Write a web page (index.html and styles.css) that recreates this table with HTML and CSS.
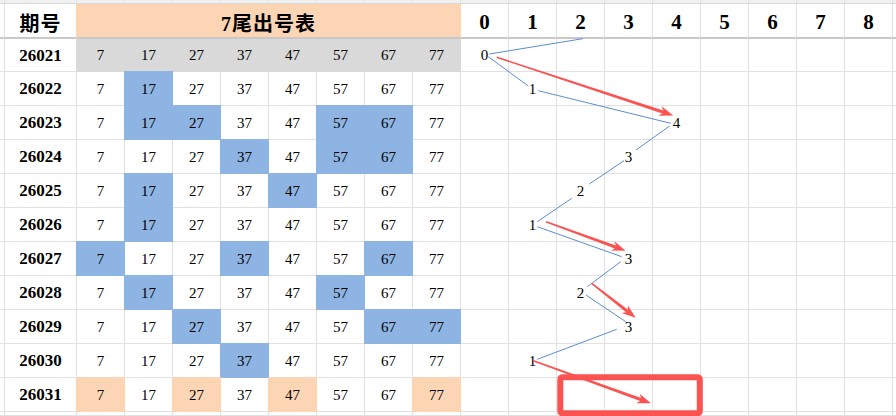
FILE: index.html
```html
<!DOCTYPE html>
<html lang="zh">
<head>
<meta charset="utf-8">
<title>7尾出号表</title>
<link rel="stylesheet" href="styles.css">
</head>
<body>
<div class="sheet">
  <div class="row top">
    <div></div><div></div><div></div><div></div><div></div><div></div><div></div><div></div><div></div><div></div><div></div><div></div><div></div><div></div><div></div><div></div><div></div><div></div><div></div><div class="last"></div>
  </div>
  <div class="row hdr">
    <div></div><div class="qh">期号</div><div class="tt">7尾出号表</div>
    <div class="hn">0</div><div class="hn">1</div><div class="hn">2</div><div class="hn">3</div><div class="hn">4</div><div class="hn">5</div><div class="hn">6</div><div class="hn">7</div><div class="hn">8</div><div class="last"></div>
  </div>
  <div class="row r1">
    <div></div><div class="id">26021</div>
    <div class="g">7</div><div class="g">17</div><div class="g">27</div><div class="g">37</div><div class="g">47</div><div class="g">57</div><div class="g">67</div><div class="g">77</div>
    <div>0</div><div></div><div></div><div></div><div></div><div></div><div></div><div></div><div></div><div class="last"></div>
  </div>
  <div class="row">
    <div></div><div class="id">26022</div>
    <div>7</div><div class="b">17</div><div>27</div><div>37</div><div>47</div><div>57</div><div>67</div><div>77</div>
    <div></div><div>1</div><div></div><div></div><div></div><div></div><div></div><div></div><div></div><div class="last"></div>
  </div>
  <div class="row">
    <div></div><div class="id">26023</div>
    <div>7</div><div class="b">17</div><div class="b">27</div><div>37</div><div>47</div><div class="b">57</div><div class="b">67</div><div>77</div>
    <div></div><div></div><div></div><div></div><div>4</div><div></div><div></div><div></div><div></div><div class="last"></div>
  </div>
  <div class="row">
    <div></div><div class="id">26024</div>
    <div>7</div><div>17</div><div>27</div><div class="b">37</div><div>47</div><div class="b">57</div><div class="b">67</div><div>77</div>
    <div></div><div></div><div></div><div>3</div><div></div><div></div><div></div><div></div><div></div><div class="last"></div>
  </div>
  <div class="row">
    <div></div><div class="id">26025</div>
    <div>7</div><div class="b">17</div><div>27</div><div>37</div><div class="b">47</div><div>57</div><div>67</div><div>77</div>
    <div></div><div></div><div>2</div><div></div><div></div><div></div><div></div><div></div><div></div><div class="last"></div>
  </div>
  <div class="row">
    <div></div><div class="id">26026</div>
    <div>7</div><div class="b">17</div><div>27</div><div>37</div><div>47</div><div>57</div><div>67</div><div>77</div>
    <div></div><div>1</div><div></div><div></div><div></div><div></div><div></div><div></div><div></div><div class="last"></div>
  </div>
  <div class="row">
    <div></div><div class="id">26027</div>
    <div class="b">7</div><div>17</div><div>27</div><div class="b">37</div><div>47</div><div>57</div><div class="b">67</div><div>77</div>
    <div></div><div></div><div></div><div>3</div><div></div><div></div><div></div><div></div><div></div><div class="last"></div>
  </div>
  <div class="row">
    <div></div><div class="id">26028</div>
    <div>7</div><div class="b">17</div><div>27</div><div>37</div><div>47</div><div class="b">57</div><div>67</div><div>77</div>
    <div></div><div></div><div>2</div><div></div><div></div><div></div><div></div><div></div><div></div><div class="last"></div>
  </div>
  <div class="row">
    <div></div><div class="id">26029</div>
    <div>7</div><div>17</div><div class="b">27</div><div>37</div><div>47</div><div>57</div><div class="b">67</div><div class="b">77</div>
    <div></div><div></div><div></div><div>3</div><div></div><div></div><div></div><div></div><div></div><div class="last"></div>
  </div>
  <div class="row">
    <div></div><div class="id">26030</div>
    <div>7</div><div>17</div><div>27</div><div class="b">37</div><div>47</div><div>57</div><div>67</div><div>77</div>
    <div></div><div>1</div><div></div><div></div><div></div><div></div><div></div><div></div><div></div><div class="last"></div>
  </div>
  <div class="row">
    <div></div><div class="id">26031</div>
    <div class="p">7</div><div>17</div><div class="p">27</div><div>37</div><div class="p">47</div><div>57</div><div>67</div><div class="p">77</div>
    <div></div><div></div><div></div><div></div><div></div><div></div><div></div><div></div><div></div><div class="last"></div>
  </div>
  <div class="row bot">
    <div></div><div></div><div></div><div></div><div></div><div></div><div></div><div></div><div></div><div></div><div></div><div></div><div></div><div></div><div></div><div></div><div></div><div></div><div></div><div class="last"></div>
  </div>
</div>

<svg class="overlay" width="896" height="416" viewBox="0 0 896 416" xmlns="http://www.w3.org/2000/svg">
  <g class="trend">
    <line x1="489.3" y1="54" x2="582.7" y2="38.7"/>
    <line x1="488.3" y1="56.7" x2="528.3" y2="86"/>
    <line x1="538.3" y1="90.7" x2="670.7" y2="123.3"/>
    <line x1="669.6" y1="126" x2="636" y2="150"/>
    <line x1="624" y1="160.7" x2="589.3" y2="184"/>
    <line x1="571.7" y1="198.3" x2="537.3" y2="221.7"/>
    <line x1="537.3" y1="226.7" x2="621.7" y2="256.7"/>
    <line x1="620.7" y1="261.7" x2="587.3" y2="286.7"/>
    <line x1="586" y1="295" x2="625.7" y2="321.7"/>
    <line x1="616.7" y1="329.3" x2="537.3" y2="359.3"/>
  </g>
  <rect class="mark" x="560.3" y="377.3" width="139.5" height="36" rx="2"/>
  <g class="arrows">
    <polygon points="496.47,58.01 662.35,113.58 658.44,115.87 673.3,115.5 661.57,106.37 663.35,110.54 496.93,56.59"/>
    <polygon points="545.74,222.41 614.81,248.44 610.83,250.61 625.7,250.7 614.25,241.21 615.91,245.44 546.26,220.99"/>
    <polygon points="591.24,283.89 626.05,312.19 621.59,313.02 635.7,317.7 627.75,305.14 628.02,309.67 592.16,282.71"/>
    <polygon points="533.05,361.41 640.12,401.06 636.14,403.24 651,403.3 639.54,393.84 641.2,398.06 533.56,359.99"/>
  </g>
</svg>
</body>
</html>
```

FILE: styles.css
```css
html, body {
  margin: 0;
  padding: 0;
  background: #ffffff;
}

body {
  width: 896px;
  height: 416px;
  overflow: hidden;
  position: relative;
}

.sheet {
  display: grid;
  grid-template-columns: 5px 72px repeat(8, 48px) repeat(9, 48px) 3px;
  grid-template-rows: 4px 35px 33px repeat(10, 34px) 4px;
  font-family: "Liberation Serif", "Noto Sans CJK SC", serif;
  font-size: 15px;
  color: #000000;
}

.row {
  display: contents;
}

.row > div {
  box-sizing: border-box;
  border-right: 1px solid #e1e1e1;
  border-bottom: 1px solid #e1e1e1;
  display: flex;
  align-items: center;
  justify-content: center;
  padding-top: 1px;
  background: #ffffff;
  overflow: hidden;
}

.row > div.last {
  border-right: none;
}

.top > div {
  background: #f0f0f0;
  border-bottom-color: #d9d9d9;
}

.hdr > div {
  border-bottom: 2px solid #c8c8c8;
  font-weight: bold;
  padding-top: 3px;
}

.qh {
  font-family: "Noto Sans CJK SC", sans-serif;
  font-size: 20px;
  font-weight: 700;
  letter-spacing: 1px;
}

.hdr > div.tt {
  grid-column: span 8;
  background: #fcd5b4;
  border-right-color: #fcd5b4;
  box-shadow: -1px 0 0 #fcd5b4;
  font-family: "Liberation Serif", "Noto Sans CJK SC", serif;
  font-size: 20px;
  letter-spacing: 1px;
}

.hn {
  font-size: 21px;
}

.id {
  font-weight: bold;
  font-size: 17px;
}

.row > div.g {
  background: #d9d9d9;
  border-color: #d9d9d9;
  box-shadow: -1px 0 0 #d9d9d9;
}

.row > div.b {
  background: #8db4e2;
  border-color: #8db4e2;
  box-shadow: -1px 0 0 #8db4e2, 0 -1px 0 #8db4e2, -1px -1px 0 #8db4e2;
}

.row > div.p {
  background: #fcd5b4;
  border-color: #fcd5b4;
  box-shadow: -1px 0 0 #fcd5b4, 0 -1px 0 #fcd5b4, -1px -1px 0 #fcd5b4;
}

.overlay {
  position: absolute;
  left: 0;
  top: 0;
  pointer-events: none;
}

.trend line {
  stroke: #5b8dd6;
  stroke-width: 1;
  fill: none;
}

.mark {
  fill: none;
  stroke: #fb5252;
  stroke-width: 6;
}

.arrows polygon {
  fill: #fb5252;
  stroke: none;
}
```
